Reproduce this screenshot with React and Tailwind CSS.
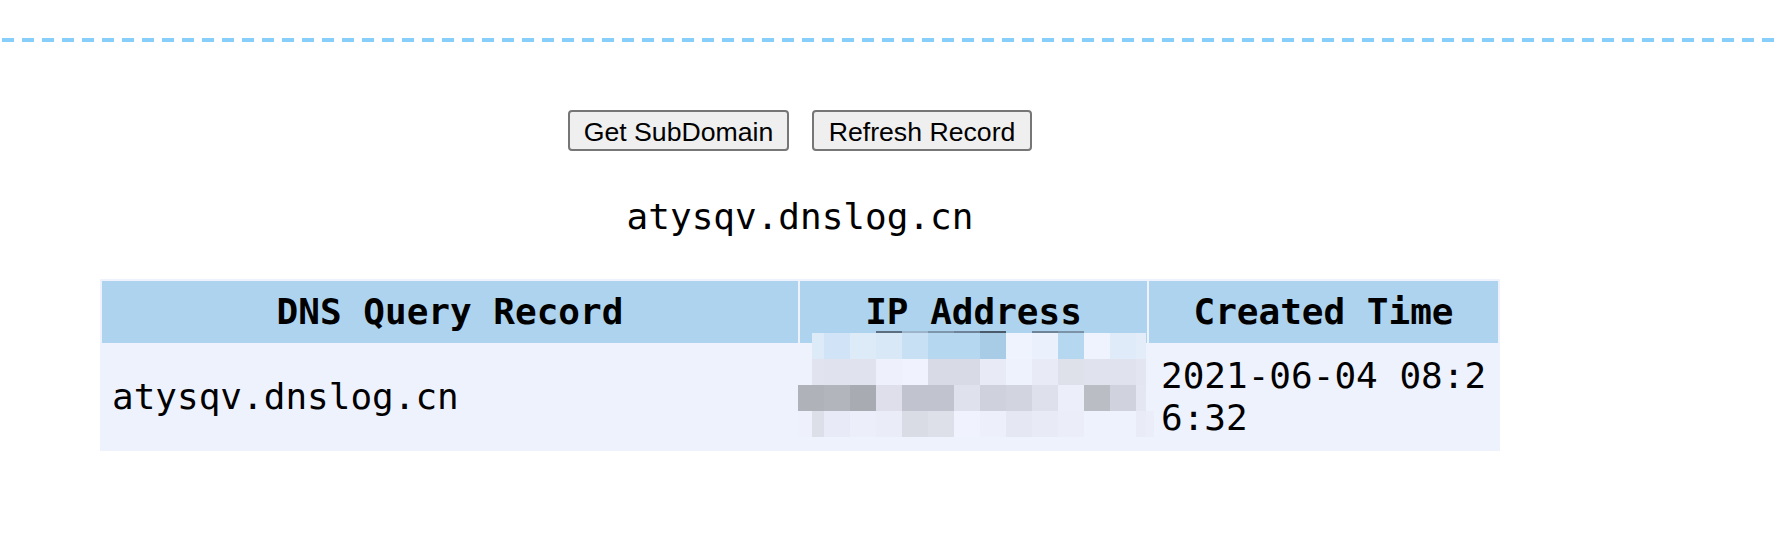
import React from "react";

const mono = "font-['DejaVu_Sans_Mono','Liberation_Mono',monospace]";

// mosaic column edges (x relative to the blurred area)
const xs = [0, 14, 26, 52, 78, 104, 130, 156, 182, 208, 234, 260, 286, 312, 338, 348, 356];

const rows = [
  {
    y: 2,
    from: 1,
    colors: ["#DDEAF8", "#D0E3F7", "#DDEAF8", "#D8E8F7", "#C8E0F3", "#B5D7F0", "#B5D7F0", "#A8CCE6", "#EEF3FD", "#EBF1FC", "#B5D7F0", "#EEF3FD", "#DFEBF9", "#E3EDFA"],
  },
  {
    y: 28,
    from: 1,
    colors: ["#E1E4EE", "#E0E2EE", "#E0E2EE", "#EEF1FC", "#F0F3FD", "#D8DBE5", "#D8DBE5", "#E8EBF5", "#EEF2FD", "#E8EBF6", "#DEE0EA", "#E0E3ED", "#E0E3ED", "#E3E6F0"],
  },
  {
    y: 54,
    from: 0,
    colors: ["#B0B2BA", "#B0B2BA", "#B3B5BD", "#A9ABB3", "#DEDFEA", "#C1C3CE", "#C1C3CE", "#DFE2EC", "#CFD2DC", "#D2D5DF", "#DEE1EB", "#ECEFFA", "#BBBDC5", "#D0D3DD", "#E4E7F1"],
  },
  {
    y: 80,
    from: 0,
    colors: ["#EEF1FC", "#DCDEE8", "#E8EBF7", "#ECEEF9", "#EAECF7", "#DADCE5", "#DDDFE9", "#F0F3FE", "#EDF0FB", "#E5E8F3", "#E8EBF6", "#EBEEF9", "#EEF2FD", "#EEF2FD", "#E9ECF7", "#EBEEF8"],
  },
];

const stripe = [
  [78, "#5C6F80"],
  [104, "#9DB5CA"],
  [130, "#7F97AD"],
  [156, "#6E8398"],
  [182, "#4A5A68"],
  [234, "#6F8396"],
  [260, "#7C92A6"],
];

function Mosaic() {
  return (
    <svg className="absolute left-[698px] top-[52px]" width="356" height="108" viewBox="0 0 356 108">
      {stripe.map(([x, c]) => (
        <rect key={"s" + x} x={x} y={0} width={26} height={2} fill={c} />
      ))}
      {rows.map((r) =>
        r.colors.map((c, i) => {
          const k = r.from + i;
          return <rect key={r.y + "-" + k} x={xs[k]} y={r.y} width={xs[k + 1] - xs[k]} height={26} fill={c} />;
        })
      )}
    </svg>
  );
}

function App() {
  return (
    <div className="w-[1774px] h-[556px] bg-white pt-[38px]">
      <div className="h-[4px] w-full bg-[repeating-linear-gradient(90deg,transparent_0_2px,#87CEFA_2px_14px,transparent_14px_20px)]" />
      <div className="w-[1600px] flex flex-col items-center">
        <div className="mt-[68px] flex gap-[23px]">
          <button className="w-[221px] h-[41px] border-2 border-[#767676] rounded-[4px] bg-[#EFEFEF] font-['Liberation_Sans',Arial,sans-serif] text-[26.67px] text-black">
            Get SubDomain
          </button>
          <button className="w-[220px] h-[41px] border-2 border-[#767676] rounded-[4px] bg-[#EFEFEF] font-['Liberation_Sans',Arial,sans-serif] text-[26.67px] text-black">
            Refresh Record
          </button>
        </div>
        <p className={`${mono} mt-[45px] text-[36px] leading-[42px] text-black`}>atysqv.dnslog.cn</p>
        <div className="relative mt-[41px]">
          <table className={`${mono} w-[1400px] table-fixed border-separate border-spacing-[2px] bg-[#EEF2FD] text-[36px] leading-[42px] text-black break-all`}>
            <thead>
              <tr>
                <th className="w-[696px] bg-[#AED3EE] px-[10px] py-[10px] font-bold text-center">DNS Query Record</th>
                <th className="w-[347px] bg-[#AED3EE] px-[10px] py-[10px] font-bold text-center">IP Address</th>
                <th className="w-[349px] bg-[#AED3EE] px-[10px] py-[10px] font-bold text-center">Created Time</th>
              </tr>
            </thead>
            <tbody>
              <tr>
                <td className="px-[10px] py-[10px] align-middle">atysqv.dnslog.cn</td>
                <td className="px-[10px] py-[10px] align-middle"></td>
                <td className="pl-[12px] pr-[10px] py-[10px] align-middle">2021-06-04 08:26:32</td>
              </tr>
            </tbody>
          </table>
          <Mosaic />
        </div>
      </div>
    </div>
  );
}

export default App;
